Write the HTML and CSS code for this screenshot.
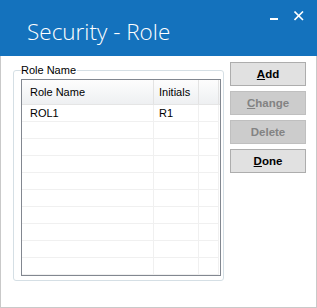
FILE: index.html
```html
<!DOCTYPE html>
<html>
<head>
    <link rel="stylesheet" href="styles.css">
</head>
<body>
    <div class="window">
        <header class="titlebar">
            <h1 class="title">Security - Role</h1>
            <div class="controls">
                <svg class="ctl" width="10" height="10" viewBox="0 0 10 10"><rect x="0" y="7" width="8" height="2" fill="#fff"/></svg>
                <svg class="ctl" width="10" height="10" viewBox="0 0 10 10"><path d="M0.5 0.5 L9 9 M9 0.5 L0.5 9" stroke="#fff" stroke-width="1.6"/></svg>
            </div>
        </header>
        <main class="content">
            <fieldset class="group">
                <legend class="legend">Role Name</legend>
                <div class="grid">
                    <div class="row head">
                        <div class="cell c1">Role Name</div>
                        <div class="cell c2">Initials</div>
                        <div class="cell c3"></div>
                    </div>
                    <div class="row">
                        <div class="cell c1">ROL1</div>
                        <div class="cell c2">R1</div>
                        <div class="cell c3"></div>
                    </div>
                    <div class="row"><div class="cell c1"></div><div class="cell c2"></div><div class="cell c3"></div></div>
                    <div class="row"><div class="cell c1"></div><div class="cell c2"></div><div class="cell c3"></div></div>
                    <div class="row"><div class="cell c1"></div><div class="cell c2"></div><div class="cell c3"></div></div>
                    <div class="row"><div class="cell c1"></div><div class="cell c2"></div><div class="cell c3"></div></div>
                    <div class="row"><div class="cell c1"></div><div class="cell c2"></div><div class="cell c3"></div></div>
                    <div class="row"><div class="cell c1"></div><div class="cell c2"></div><div class="cell c3"></div></div>
                    <div class="row"><div class="cell c1"></div><div class="cell c2"></div><div class="cell c3"></div></div>
                    <div class="row"><div class="cell c1"></div><div class="cell c2"></div><div class="cell c3"></div></div>
                    <div class="row"><div class="cell c1"></div><div class="cell c2"></div><div class="cell c3"></div></div>
                </div>
            </fieldset>
            <div class="buttons">
                <button class="btn"><u>A</u>dd</button>
                <button class="btn" disabled><u>C</u>hange</button>
                <button class="btn" disabled>Delete</button>
                <button class="btn"><u>D</u>one</button>
            </div>
        </main>
    </div>
</body>
</html>
```

FILE: styles.css
```css
body { margin: 0; background: #fff; font-family: "Liberation Sans", Arial, sans-serif; }
.window { width: 317px; height: 308px; display: flex; flex-direction: column; }

.titlebar {
    height: 56px; background: #1472bd; color: #fff;
    display: flex; justify-content: space-between; align-items: flex-start;
}
.title {
    margin: 16px 0 0 27px; font-family: "Open Sans", "Noto Sans", sans-serif;
    font-weight: 300; font-size: 22.5px; line-height: 32px; letter-spacing: 0;
}
.controls { display: flex; gap: 14px; padding: 11px 13px 0 0; }
.ctl { display: block; }

.content {
    flex: 1; display: flex; align-items: flex-start;
    border: 1px solid #c9c9c9; border-top: 0;
    padding: 8px 0 0 12px;
}

.group {
    margin: 0; width: 211px; box-sizing: border-box;
    border: 1px solid #d5dfe5; border-radius: 3px;
    padding: 2px 2px 4px 7px; min-width: 0;
}
.legend { padding: 0 1px 0 0; font-size: 11px; line-height: 13px; color: #000; }

.grid {
    width: 200px; height: 197px; box-sizing: border-box;
    border: 1px solid #828790; overflow: hidden; font-size: 11px;
}
.row { display: flex; height: 17px; box-sizing: border-box; border-bottom: 1px solid #f0f0f0; margin-right: 1px; }
.row.head {
    height: 25px; border-bottom: 1px solid #e5e5e5; margin-right: 0;
    background: linear-gradient(#fdfdfd, #eef0f2);
}
.cell { box-sizing: border-box; border-right: 1px solid #f0f0f0; padding-top: 2px; white-space: nowrap; }
.head .cell { border-right-color: #e3e3e3; padding-top: 6px; }
.c1 { width: 132px; padding-left: 8px; }
.c2 { width: 45px; padding-left: 5px; }
.c3 { width: 20px; }

.buttons { display: flex; flex-direction: column; gap: 5px; margin: -2px 0 0 6px; }
.btn {
    width: 76px; height: 24px; box-sizing: border-box; padding: 0;
    background: #e1e1e1; border: 1px solid #adadad; color: #000;
    font-family: "Liberation Sans", Arial, sans-serif; font-weight: bold; font-size: 11.5px;
}
.btn:disabled { background: #cccccc; border-color: #bfbfbf; color: #838383; }
```
